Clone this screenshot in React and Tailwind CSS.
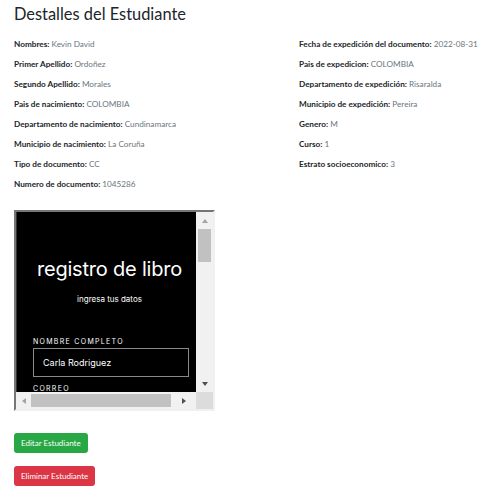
import React from "react";

const left = [
  ["Nombres:", "Kevin David"],
  ["Primer Apellido:", "Ordoñez"],
  ["Segundo Apellido:", "Morales"],
  ["Pais de nacimiento:", "COLOMBIA"],
  ["Departamento de nacimiento:", "Cundinamarca"],
  ["Municipio de nacimiento:", "La Coruña"],
  ["Tipo de documento:", "CC"],
  ["Numero de documento:", "1045286"],
];
const right = [
  ["Fecha de expedición del documento:", "2022-08-31"],
  ["Pais de expedicion:", "COLOMBIA"],
  ["Departamento de expedición:", "Risaralda"],
  ["Municipio de expedición:", "Pereira"],
  ["Genero:", "M"],
  ["Curso:", "1"],
  ["Estrato socioeconomico:", "3"],
];

function Row({ k, v }) {
  return (
    <div className="h-5 leading-[20px] whitespace-nowrap">
      <span className="font-bold text-[#212529]">{k}</span>{" "}
      <span className="text-[#6c757d]">{v}</span>
    </div>
  );
}

function Tri({ dir, color }) {
  const pts = {
    up: "0,4 3,0 6,4",
    down: "0,0 6,0 3,4",
    left: "4,0 4,6 0,3",
    right: "0,0 0,6 4,3",
  }[dir];
  const w = dir === "up" || dir === "down" ? 6 : 4;
  const h = dir === "up" || dir === "down" ? 4 : 6;
  return (
    <svg width={w} height={h} viewBox={`0 0 ${w} ${h}`}>
      <polygon points={pts} fill={color} />
    </svg>
  );
}

export default function App() {
  return (
    <div className="w-[496px] h-[497px] bg-white text-[8px] font-['Lato',sans-serif] overflow-hidden">
      <div className="pl-[14px] pt-[4px]">
        <h2 className="text-[16.4px] leading-[19px] font-normal text-[#212529] font-['Lato',sans-serif]">Destalles del Estudiante</h2>
        <div className="flex mt-[11px] text-[8.2px]">
          <div className="w-[285px]">
            {left.map(([k, v]) => (
              <Row key={k} k={k} v={v} />
            ))}
          </div>
          <div>
            {right.map(([k, v]) => (
              <Row key={k} k={k} v={v} />
            ))}
          </div>
        </div>

        <div className="mt-[16px] w-[201px] h-[201px] border-2 border-t-[#767676] border-l-[#767676] border-r-[#f0f0f0] border-b-[#f0f0f0] flex flex-col">
          <div className="flex flex-1 min-h-0">
            <div className="w-[180px] bg-black overflow-hidden border-l border-[#333]">
              <div className="pt-[45px] pl-[6px] text-center font-['Inter',sans-serif]">
                <div className="text-[20px] leading-[24px] text-white tracking-[-0.2px]">registro de libro</div>
                <div className="mt-[13px] text-[8px] leading-[10px] text-white">ingresa tus datos</div>
              </div>
              <div className="pl-[16px] pr-[7px] font-['Inter',sans-serif]">
                <div className="mt-[33px] text-[7px] leading-[9px] tracking-[1.3px] text-white">NOMBRE COMPLETO</div>
                <div className="mt-[2px] h-[29px] border border-[#8a8a8a] flex items-center pl-[9px] text-[9px] text-white">
                  Carla Rodriguez
                </div>
                <div className="mt-[7px] text-[7px] leading-[9px] tracking-[1.3px] text-white">CORREO</div>
              </div>
            </div>
            <div className="w-[17px] bg-[#f1f1f1] flex flex-col items-center">
              <div className="h-[17px] flex items-center justify-center">
                <Tri dir="up" color="#a3a3a3" />
              </div>
              <div className="w-[13px] h-[33px] bg-[#c1c1c1]" />
              <div className="flex-1" />
              <div className="h-[17px] flex items-center justify-center">
                <Tri dir="down" color="#505050" />
              </div>
            </div>
          </div>
          <div className="h-[17px] flex">
            <div className="w-[180px] bg-[#f1f1f1] flex items-center">
              <div className="w-[15px] flex justify-center">
                <Tri dir="left" color="#a3a3a3" />
              </div>
              <div className="w-[140px] h-[13px] bg-[#c1c1c1]" />
              <div className="flex-1 flex justify-center">
                <Tri dir="right" color="#505050" />
              </div>
            </div>
            <div className="w-[17px] bg-[#dcdcdc]" />
          </div>
        </div>

        <div className="mt-[22px] flex flex-col items-start gap-[13px]">
          <button className="h-[20px] px-[7px] rounded-[3px] bg-[#28a745] text-white text-[8px] leading-[20px]">
            Editar Estudiante
          </button>
          <button className="h-[20px] px-[7px] rounded-[3px] bg-[#dc3545] text-white text-[8px] leading-[20px]">
            Eliminar Estudiante
          </button>
        </div>
      </div>
    </div>
  );
}
